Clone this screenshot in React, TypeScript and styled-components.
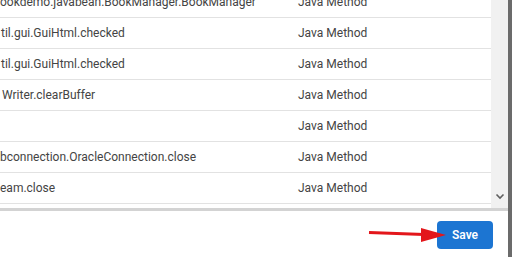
import React from "react";
import styled, { createGlobalStyle } from "styled-components";

const Global = createGlobalStyle`
  html, body { margin: 0; padding: 0; background: #ffffff; overflow: hidden; }
  body { font-family: Roboto, "Liberation Sans", Arial, sans-serif; }
`;

const Frame = styled.div`
  display: flex;
  width: 512px;
  height: 257px;
  background: #ffffff;
`;

const Main = styled.div`
  flex: 1;
  display: flex;
  flex-direction: column;
  min-width: 0;
`;

const WindowEdge = styled.div`
  width: 4px;
  background: #6b6b6b;
`;

const TableArea = styled.div`
  display: flex;
  height: 208px;
`;

const Viewport = styled.div`
  flex: 1;
  overflow: hidden;
`;

const RowList = styled.div`
  margin-top: -13px;
  display: flex;
  flex-direction: column;
`;

const Row = styled.div`
  display: grid;
  grid-template-columns: 298px 1fr;
  align-items: center;
  height: 30px;
  border-bottom: 1px solid #e2e2e2;
  font-size: 12px;
  color: #444444;
  white-space: nowrap;
`;

const NameCell = styled.div<{ $shift: number }>`
  overflow: hidden;
  padding-left: ${(p) => p.$shift}px;
`;

const TypeCell = styled.div``;

const Scrollbar = styled.div`
  width: 17px;
  background: #f1f1f1;
  display: flex;
  flex-direction: column;
  justify-content: flex-end;
  align-items: center;
`;

const ScrollButton = styled.div`
  width: 17px;
  height: 17px;
  margin-bottom: 3px;
  display: flex;
  align-items: center;
  justify-content: center;
`;

const Divider = styled.div`
  height: 3px;
  background: #d3d3d3;
`;

const Footer = styled.div`
  position: relative;
  flex: 1;
  display: flex;
  justify-content: flex-end;
  align-items: flex-start;
  padding: 10px 15px 0 0;
`;

const SaveButton = styled.button`
  width: 56px;
  height: 28px;
  border: none;
  border-radius: 4px;
  background: #1c75d2;
  color: #ffffff;
  font-family: Roboto, "Liberation Sans", Arial, sans-serif;
  font-size: 12px;
  font-weight: 600;
  padding: 0;
  cursor: pointer;
`;

const ArrowOverlay = styled.svg`
  position: absolute;
  left: 0;
  top: 0;
  pointer-events: none;
`;

const rows: { name: string; shift: number }[] = [
  { name: "ookdemo.javabean.BookManager.BookManager", shift: 0 },
  { name: "til.gui.GuiHtml.checked", shift: 1 },
  { name: "til.gui.GuiHtml.checked", shift: 1 },
  { name: "Writer.clearBuffer", shift: 2 },
  { name: "", shift: 0 },
  { name: "bconnection.OracleConnection.close", shift: 0 },
  { name: "eam.close", shift: 0 },
];

export default function App() {
  return (
    <>
      <Global />
      <Frame>
        <Main>
          <TableArea>
            <Viewport>
              <RowList>
                {rows.map((r, i) => (
                  <Row key={i}>
                    <NameCell $shift={r.shift}>{r.name}</NameCell>
                    <TypeCell>Java Method</TypeCell>
                  </Row>
                ))}
              </RowList>
            </Viewport>
            <Scrollbar>
              <ScrollButton>
                <svg width="10" height="7" viewBox="0 0 10 7">
                  <path d="M1.5 1.5 L5 5 L8.5 1.5" fill="none" stroke="#5f5f5f" strokeWidth="1.6" />
                </svg>
              </ScrollButton>
            </Scrollbar>
          </TableArea>
          <Divider />
          <Footer>
            <SaveButton>Save</SaveButton>
            <ArrowOverlay width="508" height="46" viewBox="0 0 508 46">
              <path d="M369 21.5 L424 23.5" stroke="#e3161b" strokeWidth="3" fill="none" />
              <polygon points="421,17 446,24 421,31" fill="#e3161b" />
            </ArrowOverlay>
          </Footer>
        </Main>
        <WindowEdge />
      </Frame>
    </>
  );
}
